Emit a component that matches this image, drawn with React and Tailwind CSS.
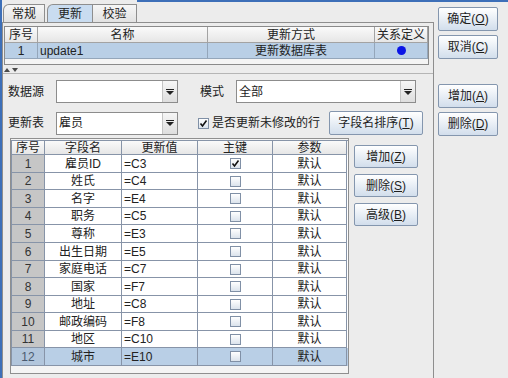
import React from 'react';

const topCols = ['w-[33px]', 'w-[170px]', 'w-[167px]', 'w-[53px]'];

const fields = [
  ['1', '雇员ID', '=C3', true],
  ['2', '姓氏', '=C4', false],
  ['3', '名字', '=E4', false],
  ['4', '职务', '=C5', false],
  ['5', '尊称', '=E3', false],
  ['6', '出生日期', '=E5', false],
  ['7', '家庭电话', '=C7', false],
  ['8', '国家', '=F7', false],
  ['9', '地址', '=C8', false],
  ['10', '邮政编码', '=F8', false],
  ['11', '地区', '=C10', false],
  ['12', '城市', '=E10', false],
];

const rowHeights = ['h-[18px]', 'h-[17px]', 'h-[18px]', 'h-[17px]', 'h-[18px]', 'h-[18px]', 'h-[17px]', 'h-[18px]', 'h-[17px]', 'h-[18px]', 'h-[17px]', 'h-[18px]'];

function Btn({ label, mnemonic, className }) {
  return (
    <div className={`flex items-center justify-center border border-[#8496ae] rounded-[2px] bg-linear-to-b from-[#ffffff] to-[#d2deec] text-[12px] text-[#1e1e1e] ${className}`}>
      {label}(<span className="underline">{mnemonic}</span>)
    </div>
  );
}

function Combo({ value, className }) {
  return (
    <div className={`flex h-[23px] border border-[#8c8c8c] bg-white ${className}`}>
      <div className="flex-1 flex items-center pl-[2px] text-[12px] text-[#222]">{value}</div>
      <div className="w-[15px] flex items-center justify-center border-l border-[#c4c4c4] bg-linear-to-b from-[#f6f6f6] to-[#dedede]">
        <svg width="8" height="6" viewBox="0 0 8 6">
          <rect x="0" y="0" width="8" height="1" fill="#222" />
          <path d="M0 2 L8 2 L4 6 Z" fill="#222" />
        </svg>
      </div>
    </div>
  );
}

function Check({ checked }) {
  return (
    <div className="w-[11px] h-[11px] border border-[#8090a6] bg-linear-to-b from-[#ffffff] to-[#dbe3ec] flex items-center justify-center">
      {checked && (
        <svg width="9" height="9" viewBox="0 0 9 9">
          <path d="M1.5 4.5 L3.5 7 L7.5 1.5" stroke="#111" strokeWidth="1.6" fill="none" />
        </svg>
      )}
    </div>
  );
}

export default function App() {
  return (
    <div className="w-[508px] h-[378px] overflow-hidden bg-[#ececec] border-l-2 border-[#3d6fb8] flex flex-col text-[12px] text-[#222] font-['Liberation_Sans','Noto_Sans_CJK_SC',sans-serif]">
      {/* top edge */}
      <div className="h-[2px] flex">
        <div className="w-[135px]"></div>
        <div className="flex-1 bg-[#3d6fb8]"></div>
      </div>

      <div className="flex-1 flex">
        {/* tabbed area */}
        <div className="w-[432px] flex flex-col">
          <div className="h-[20px] pt-[2px] flex items-end pl-[1px]">
            <div className="w-[42px] h-[18px] flex items-center justify-center border border-b-0 border-[#8e8e8e] rounded-tl-[6px] bg-linear-to-b from-[#f6f6f6] to-[#e2e2e2]">常规</div>
            <div className="w-[46px] h-[18px] ml-[2px] flex items-center justify-center border border-b-0 border-[#8e8e8e] rounded-tl-[6px] bg-[#c9dcf0]">更新</div>
            <div className="w-[44px] h-[18px] flex items-center justify-center border border-b-0 border-l-0 border-[#8e8e8e] rounded-tr-[1px] bg-linear-to-b from-[#f6f6f6] to-[#e2e2e2]">校验</div>
          </div>

          <div className="flex-1 border border-b-0 border-[#8e8e8e] flex flex-col">
            {/* top table */}
            <div className="mt-[3px] ml-[1px] w-[425px] h-[39px] border border-[#8a8a8a] bg-[#f4f4f4]">
              <div className="flex h-[16px]">
                {['序号', '名称', '更新方式', '关系定义'].map((h, i) => (
                  <div key={h} className={`${topCols[i]} flex items-center justify-center border-r border-b border-[#a3a3a3] bg-linear-to-b from-[#fafafa] to-[#e6e6e6]`}>{h}</div>
                ))}
              </div>
              <div className="flex h-[16px] bg-[#b9cfe6]">
                <div className="w-[33px] flex items-center justify-center border-r border-b border-[#94a6ba]">1</div>
                <div className="w-[170px] flex items-center pl-[2px] border-r border-b border-[#94a6ba]">update1</div>
                <div className="w-[167px] flex items-center justify-center border-r border-b border-[#94a6ba]">更新数据库表</div>
                <div className="w-[53px] flex items-center justify-center border-r border-b border-[#94a6ba]">
                  <div className="w-[9px] h-[9px] rounded-full bg-[#0a14e6]"></div>
                </div>
              </div>
            </div>

            {/* splitter */}
            <div className="h-[8px] flex items-end pl-[1px] pb-[1px] gap-[2px]">
              <svg width="6" height="4" viewBox="0 0 6 4"><path d="M0 4 L6 4 L3 0 Z" fill="#4a4a4a" /></svg>
              <svg width="6" height="4" viewBox="0 0 6 4"><path d="M0 0 L6 0 L3 4 Z" fill="#4a4a4a" /></svg>
            </div>

            {/* lower panel */}
            <div className="flex-1 border-t border-[#b5b5b5] flex flex-col">
              <div className="mt-[6px] flex items-center pl-[5px]">
                <div className="w-[48px]">数据源</div>
                <Combo value="" className="w-[122px]" />
                <div className="ml-[22px] w-[36px]">模式</div>
                <Combo value="全部" className="w-[180px]" />
              </div>

              <div className="mt-[8px] h-[24px] flex items-center pl-[5px]">
                <div className="w-[48px]">更新表</div>
                <Combo value="雇员" className="w-[122px]" />
                <div className="ml-[20px]">
                  <Check checked />
                </div>
                <div className="ml-[3px] w-[117px]">是否更新未修改的行</div>
                <Btn label="字段名排序" mnemonic="T" className="w-[94px] h-[24px]" />
              </div>

              <div className="mt-[3px] flex">
                <div className="ml-[7px] w-[339px] h-[236px] border border-[#8f8f8f] bg-[#f4f4f4] pt-[1px]">
                  <div className="flex h-[15px] border-t border-[#8794a8]">
                    {[['序号', 'w-[34px] border-l'], ['字段名', 'w-[77px]'], ['更新值', 'w-[76px]'], ['主键', 'w-[75px]'], ['参数', 'w-[74px]']].map(([h, w]) => (
                      <div key={h} className={`${w} flex items-center justify-center border-r border-b border-[#8794a8] bg-linear-to-b from-[#fafafa] to-[#e6e6e6]`}>{h}</div>
                    ))}
                  </div>
                  {fields.map(([n, name, val, pk], i) => {
                    const sel = i === fields.length - 1;
                    return (
                      <div key={n} className={`flex ${rowHeights[i]} ${sel ? 'bg-[#b9cfe6]' : 'bg-white'}`}>
                        <div className={`w-[34px] flex items-center justify-center border-l border-r border-b border-[#8794a8] ${sel ? 'bg-[#b2c6dc] text-[#4a5a70]' : 'bg-[#c6c6c6] text-[#333]'}`}>{n}</div>
                        <div className="w-[77px] flex items-center justify-center border-r border-b border-[#8794a8]">{name}</div>
                        <div className="w-[76px] flex items-center pl-[2px] border-r border-b border-[#8794a8]">{val}</div>
                        <div className="w-[75px] flex items-center justify-center border-r border-b border-[#8794a8]">
                          <Check checked={pk} />
                        </div>
                        <div className="w-[74px] flex items-center justify-center border-r border-b border-[#8794a8]">默认</div>
                      </div>
                    );
                  })}
                </div>

                <div className="ml-[5px] mt-[7px] flex flex-col gap-[6px]">
                  <Btn label="增加" mnemonic="Z" className="w-[64px] h-[23px]" />
                  <Btn label="删除" mnemonic="S" className="w-[64px] h-[23px]" />
                  <Btn label="高级" mnemonic="B" className="w-[64px] h-[23px]" />
                </div>
              </div>
            </div>
          </div>
        </div>

        {/* right buttons */}
        <div className="ml-[4px] pt-[5px] flex flex-col">
          <Btn label="确定" mnemonic="O" className="w-[60px] h-[24px]" />
          <Btn label="取消" mnemonic="C" className="w-[60px] h-[24px] mt-[4px]" />
          <Btn label="增加" mnemonic="A" className="w-[60px] h-[24px] mt-[25px]" />
          <Btn label="删除" mnemonic="D" className="w-[60px] h-[24px] mt-[4px]" />
        </div>
      </div>
    </div>
  );
}
